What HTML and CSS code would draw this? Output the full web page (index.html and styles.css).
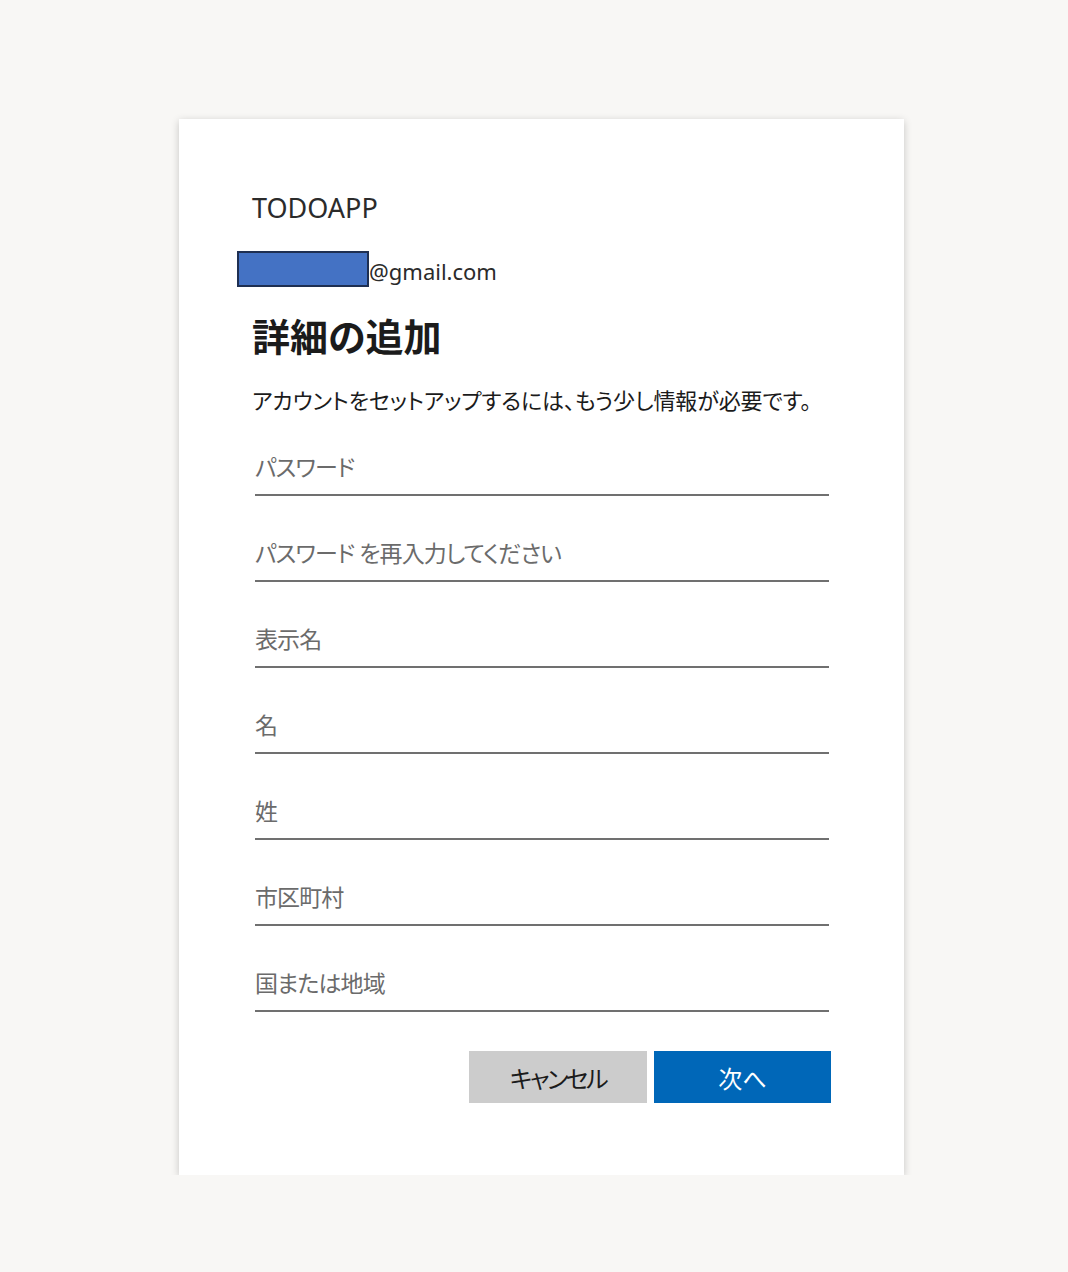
FILE: index.html
```html
<!DOCTYPE html>
<html lang="ja">
<head>
<meta charset="utf-8">
<title>詳細の追加</title>
<link rel="stylesheet" href="styles.css">
</head>
<body>
<div class="card">
  <div class="brand">TODOAPP</div>
  <div class="email"><span class="mask"></span><span class="domain">@gmail.com</span></div>
  <h1 class="title">詳細の追加</h1>
  <p class="desc">アカウントをセットアップするには、もう少し情報が必要です。</p>
  <div class="fields">
    <div class="field">パスワード</div>
    <div class="field">パスワード を再入力してください</div>
    <div class="field">表示名</div>
    <div class="field">名</div>
    <div class="field">姓</div>
    <div class="field">市区町村</div>
    <div class="field">国または地域</div>
  </div>
  <div class="actions">
    <button class="btn btn-cancel">キャンセル</button>
    <button class="btn btn-next">次へ</button>
  </div>
</div>
</body>
</html>
```

FILE: styles.css
```css
html, body {
  margin: 0;
  padding: 0;
  background: #f8f7f5;
}
body {
  padding: 119px 0 0 179px;
  font-family: "Noto Sans", "Noto Sans CJK JP", sans-serif;
  color: #1b1b1b;
  font-feature-settings: "palt";
}
.card {
  width: 725px;
  height: 1056px;
  box-sizing: border-box;
  background: #ffffff;
  box-shadow: 0 2px 8px rgba(0,0,0,0.2);
  padding: 73px 73px 0 73px;
  display: flex;
  flex-direction: column;
}
.brand {
  font-size: 27px;
  line-height: 32px;
  height: 32px;
  color: #2b2b2b;
}
.email {
  margin-top: 27px;
  display: flex;
  align-items: center;
  height: 36px;
  margin-left: -15px;
}
.mask {
  width: 128px;
  height: 32px;
  background: #4472c4;
  border: 2px solid #1e2f52;
}
.domain {
  font-size: 22px;
  line-height: 36px;
  padding-top: 4px;
  color: #2b2b2b;
}
.title {
  margin: 27px 0 0 0;
  font-size: 38px;
  line-height: 44px;
  font-weight: 700;
  color: #1b1b1b;
}
.desc {
  margin: 27px 0 0 0;
  font-size: 22px;
  line-height: 30px;
  letter-spacing: -0.1px;
  color: #1b1b1b;
}
.fields {
  margin: 37px 2px 0 3px;
  display: flex;
  flex-direction: column;
  gap: 42px;
}
.field {
  font-size: 23px;
  line-height: 30px;
  padding-bottom: 12px;
  border-bottom: 2px solid #707070;
  color: #6b6b6b;
  letter-spacing: -0.9px;
}
.actions {
  margin-top: 39px;
  display: flex;
  justify-content: flex-end;
  gap: 7px;
}
.btn {
  width: 178px;
  height: 52px;
  border: none;
  font-family: "Noto Sans CJK JP", sans-serif;
  font-feature-settings: "palt";
  font-size: 24px;
  padding: 0;
}
.btn-cancel {
  background: #cccccc;
  color: #1b1b1b;
  letter-spacing: -2.5px;
}
.btn-next {
  width: 177px;
  background: #0067b8;
  color: #ffffff;
}
```
